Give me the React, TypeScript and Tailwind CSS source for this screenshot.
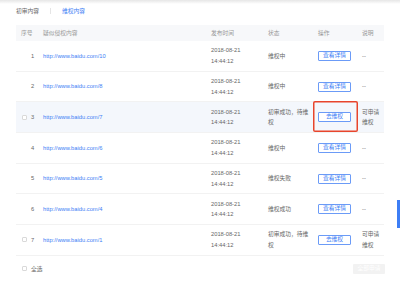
import React from "react";

type Row = {
  no: number;
  url: string;
  status: string[];
  action: "detail" | "claim";
  note: string[];
  checkbox?: boolean;
  highlight?: boolean;
};

const rows: Row[] = [
  { no: 1, url: "http://www.baidu.com/10", status: ["维权中"], action: "detail", note: ["--"] },
  { no: 2, url: "http://www.baidu.com/8", status: ["维权中"], action: "detail", note: ["--"] },
  { no: 3, url: "http://www.baidu.com/7", status: ["初审成功，待维", "权"], action: "claim", note: ["可申请", "维权"], checkbox: true, highlight: true },
  { no: 4, url: "http://www.baidu.com/6", status: ["维权中"], action: "detail", note: ["--"] },
  { no: 5, url: "http://www.baidu.com/5", status: ["维权失败"], action: "detail", note: ["--"] },
  { no: 6, url: "http://www.baidu.com/4", status: ["维权成功"], action: "detail", note: ["--"] },
  { no: 7, url: "http://www.baidu.com/1", status: ["初审成功，待维", "权"], action: "claim", note: ["可申请", "维权"], checkbox: true },
];

const cols = "grid grid-cols-[27px_168px_57px_50px_44px_26px] items-center";

function Check() {
  return <span className="inline-block w-[5px] h-[5px] border border-[#d9d9d9] rounded-[1px] bg-white" />;
}

function App() {
  return (
    <div
      className="relative w-[400px] h-[282px] bg-white text-[5.75px] leading-[10.5px] text-[#666] overflow-hidden"
      style={{ fontFamily: '"Liberation Sans", "Noto Sans CJK SC", sans-serif' }}
    >
      <div className="h-[4px] bg-linear-to-b from-[#e6e6e6] to-white" />

      <div className="flex items-center h-[14px] pl-[16px]">
        <span className="text-[#666]">初审内容</span>
        <span className="mx-[11px] w-px h-[6px] bg-[#e5e5e5]" />
        <span className="text-[#3d7ef5]">维权内容</span>
      </div>

      <div className="mx-[16px] mt-[7px]">
        <div className={`${cols} h-[16px] bg-[#f7f8fa] text-[#999]`}>
          <span className="pl-[5px]">序号</span>
          <span>疑似侵权内容</span>
          <span>发布时间</span>
          <span>状态</span>
          <span>操作</span>
          <span>说明</span>
        </div>

        {rows.map((r) => (
          <div
            key={r.no}
            className={`${cols} h-[30.7px] border-b border-[#f2f2f2] ${r.highlight ? "bg-[#f4f7fc]" : ""}`}
          >
            <span className="flex items-center gap-[4px] pl-[6px]">
              {r.checkbox ? <Check /> : <span className="w-[5px]" />}
              <span>{r.no}</span>
            </span>
            <span className="text-[#3d7ef5]">{r.url}</span>
            <span className="flex flex-col">
              <span>2018-08-21</span>
              <span>14:44:12</span>
            </span>
            <span className="flex flex-col">
              {r.status.map((s) => (
                <span key={s}>{s}</span>
              ))}
            </span>
            <span className="relative">
              <span className="flex items-center justify-center w-[33px] h-[10px] border border-[#6b9bf7] rounded-[1px] bg-white text-[#3d7ef5] leading-none">
                {r.action === "detail" ? "查看详情" : "去维权"}
              </span>
              {r.highlight && (
                <span className="absolute left-[-5px] top-[-11px] w-[45px] h-[31px] rounded-[2px] ring-[1.5px] ring-inset ring-[#e8452c]" />
              )}
            </span>
            <span className="flex flex-col">
              {r.note.map((n) => (
                <span key={n}>{n}</span>
              ))}
            </span>
          </div>
        ))}

        <div className="flex items-center justify-between h-[26px]">
          <span className="flex items-center gap-[4px] pl-[6px]">
            <Check />
            <span>全选</span>
          </span>
          <span className="flex items-center justify-center w-[32px] h-[10px] mr-[-1px] bg-[#f2f2f2] text-white leading-none rounded-[1px]">
            全部申请
          </span>
        </div>
      </div>

      <div className="absolute right-0 top-[200px] w-[3px] h-[28px] bg-[#3d7ef5]" />
    </div>
  );
}

export default App;
